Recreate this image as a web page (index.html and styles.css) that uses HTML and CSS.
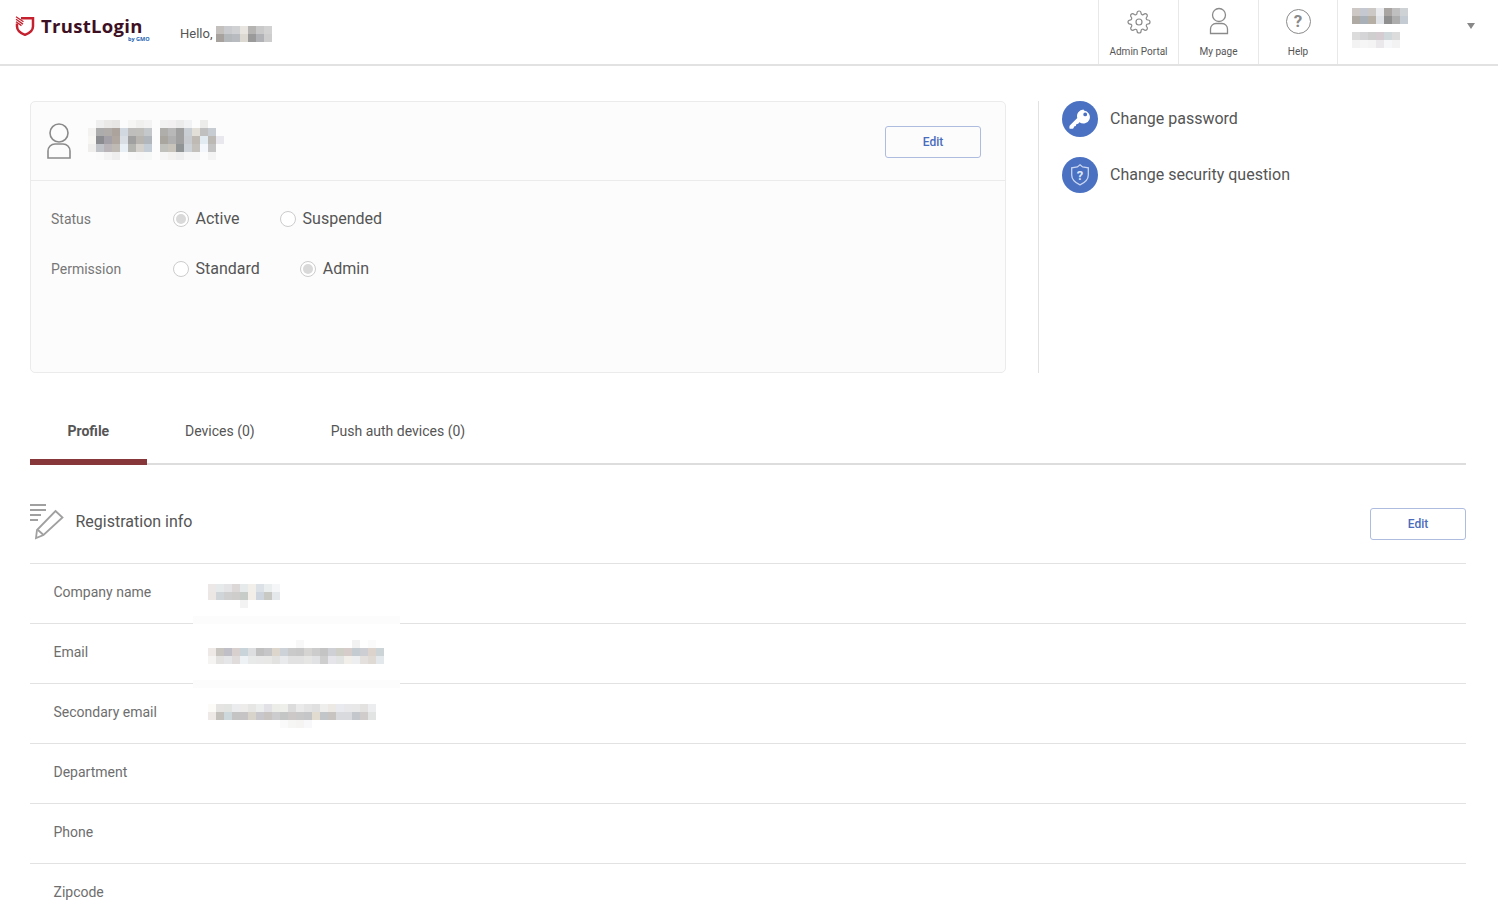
FILE: index.html
```html
<!DOCTYPE html>
<html lang="en">
<head>
<meta charset="utf-8">
<title>TrustLogin</title>
<link rel="stylesheet" href="styles.css">
</head>
<body>
<header class="topbar">
  <div class="brand">
    <svg class="shield" viewBox="0 0 20 20" width="20" height="20"><path d="M6 2.300H18v8.100c0 4-3.400 6.600-8 8.400-4.600-1.800-8-4.400-8-8.400V7.500" fill="none" stroke="#c5202e" stroke-width="2.500"/><path d="M1 .8l7.500 5M1 3.300l7 4.800M1 5.800l5.500 3.800" stroke="#c5202e" stroke-width="1.300" fill="none"/></svg>
    <div class="wordmark">TrustLogin<span class="bygmo">by GMO</span></div>
  </div>
  <div class="hello">Hello,
    <svg class="mosaic" width="56" height="16" viewBox="0 0 7 2" shape-rendering="crispEdges"><rect x="0" width="1" height="1" fill="#c4c0bd"/><rect x="1" width="1" height="1" fill="#c9cbcf"/><rect x="2" width="1" height="1" fill="#cfd1d3"/><rect x="3" width="1" height="1" fill="#e8e5e0"/><rect x="4" width="1" height="1" fill="#b5b4b3"/><rect x="5" width="1" height="1" fill="#c9c9c9"/><rect x="6" width="1" height="1" fill="#d2d2d2"/><rect x="0" y="1" width="1" height="1" fill="#a8a29e"/><rect x="1" y="1" width="1" height="1" fill="#b5b8bb"/><rect x="2" y="1" width="1" height="1" fill="#b8bcc0"/><rect x="3" y="1" width="1" height="1" fill="#dcd8d2"/><rect x="4" y="1" width="1" height="1" fill="#9a9a9a"/><rect x="5" y="1" width="1" height="1" fill="#b0b2b6"/><rect x="6" y="1" width="1" height="1" fill="#cdcdcd"/></svg>
  </div>
  <nav class="topnav">
    <a class="navitem">
      <span class="navicon"><svg width="24" height="24" viewBox="0 0 24 24" fill="none" stroke="#8a8a8a" stroke-width="1.200"><circle cx="12" cy="12" r="3"/><path d="M19.4 15a1.65 1.65 0 0 0 .33 1.82l.06.06a2 2 0 0 1 0 2.83 2 2 0 0 1-2.83 0l-.06-.06a1.65 1.65 0 0 0-1.82-.33 1.65 1.65 0 0 0-1 1.51V21a2 2 0 0 1-2 2 2 2 0 0 1-2-2v-.09A1.65 1.65 0 0 0 9 19.4a1.65 1.65 0 0 0-1.82.33l-.06.06a2 2 0 0 1-2.83 0 2 2 0 0 1 0-2.83l.06-.06a1.65 1.65 0 0 0 .33-1.82 1.65 1.65 0 0 0-1.51-1H3a2 2 0 0 1-2-2 2 2 0 0 1 2-2h.09A1.65 1.65 0 0 0 4.600 9a1.65 1.65 0 0 0-.33-1.82l-.06-.06a2 2 0 0 1 0-2.83 2 2 0 0 1 2.83 0l.06.06a1.65 1.65 0 0 0 1.82.33H9a1.65 1.65 0 0 0 1-1.51V3a2 2 0 0 1 2-2 2 2 0 0 1 2 2v.09a1.65 1.65 0 0 0 1 1.51 1.65 1.65 0 0 0 1.82-.33l.06-.06a2 2 0 0 1 2.83 0 2 2 0 0 1 0 2.83l-.06.06a1.65 1.65 0 0 0-.33 1.82V9a1.65 1.65 0 0 0 1.51 1H21a2 2 0 0 1 2 2 2 2 0 0 1-2 2h-.09a1.65 1.65 0 0 0-1.51 1z"/></svg></span>
      <span class="navlabel">Admin Portal</span>
    </a>
    <a class="navitem">
      <span class="navicon"><svg class="nav-person" width="20" height="28" viewBox="0 0 20 28" fill="none" stroke="#8a8a8a" stroke-width="1.300"><circle cx="10" cy="8" r="6.500"/><path d="M1.500 26.500v-4.500a5.500 5.500 0 0 1 5.500-5.500h6a5.500 5.500 0 0 1 5.500 5.500v4.500z"/></svg></span>
      <span class="navlabel">My page</span>
    </a>
    <a class="navitem navitem-narrow">
      <span class="navicon"><span class="helpring">?</span></span>
      <span class="navlabel">Help</span>
    </a>
    <div class="account">
      <div class="account-blocks">
        <svg class="mosaic" width="56" height="16" viewBox="0 0 7 2" shape-rendering="crispEdges"><rect x="0" width="1" height="1" fill="#cdc8c6"/><rect x="1" width="1" height="1" fill="#c5c8d0"/><rect x="2" width="1" height="1" fill="#cbc8c5"/><rect x="3" width="1" height="1" fill="#e8eaee"/><rect x="4" width="1" height="1" fill="#a8a5a3"/><rect x="5" width="1" height="1" fill="#bfbfbf"/><rect x="6" width="1" height="1" fill="#cfd2d5"/><rect x="0" y="1" width="1" height="1" fill="#b0aaa5"/><rect x="1" y="1" width="1" height="1" fill="#aab0b8"/><rect x="2" y="1" width="1" height="1" fill="#b5afa5"/><rect x="3" y="1" width="1" height="1" fill="#dfe3e8"/><rect x="4" y="1" width="1" height="1" fill="#8f8f8f"/><rect x="5" y="1" width="1" height="1" fill="#adadad"/><rect x="6" y="1" width="1" height="1" fill="#c5cbd2"/></svg>
        <svg class="mosaic" width="48" height="16" viewBox="0 0 6 2" shape-rendering="crispEdges"><rect x="0" width="1" height="1" fill="#dcdcdc"/><rect x="1" width="1" height="1" fill="#d5d5d8"/><rect x="2" width="1" height="1" fill="#cfcfcf"/><rect x="3" width="1" height="1" fill="#d4ccd0"/><rect x="4" width="1" height="1" fill="#d0d8dc"/><rect x="5" width="1" height="1" fill="#dcdcdc"/><rect x="0" y="1" width="1" height="1" fill="#f3f3f3"/><rect x="1" y="1" width="1" height="1" fill="#f6f6f6"/><rect x="2" y="1" width="1" height="1" fill="#f4f4f4"/><rect x="3" y="1" width="1" height="1" fill="#ebe8ec"/><rect x="4" y="1" width="1" height="1" fill="#f6f7f8"/><rect x="5" y="1" width="1" height="1" fill="#f3f3f3"/></svg>
      </div>
      <span class="caret"></span>
    </div>
  </nav>
</header>

<main class="page">
  <section class="summary">
    <div class="card">
      <div class="card-head">
        <svg class="card-person" width="26" height="36" viewBox="0 0 26 36" fill="none" stroke="#8a8a8a" stroke-width="1.600"><circle cx="13" cy="10" r="9"/><path d="M2 35v-7a7 7 0 0 1 7-7h8a7 7 0 0 1 7 7v7z"/></svg>
        <svg class="mosaic card-name" width="136" height="40" viewBox="0 0 17 5" shape-rendering="crispEdges">
          <rect x="1" width="1" height="1" fill="#efefef"/><rect x="2" width="1" height="1" fill="#ebe9e8"/><rect x="3" width="1" height="1" fill="#e8e6e4"/><rect x="5" width="1" height="1" fill="#f6f6f4"/><rect x="6" width="1" height="1" fill="#f0f0ee"/><rect x="7" width="1" height="1" fill="#f3f3f3"/><rect x="9" width="1" height="1" fill="#f2f2f2"/><rect x="10" width="1" height="1" fill="#f2f0f0"/><rect x="11" width="1" height="1" fill="#ebebeb"/><rect x="12" width="1" height="1" fill="#f0f2f4"/><rect x="14" width="1" height="1" fill="#ececea"/>
          <rect y="1" x="0" width="1" height="1" fill="#f4f2f0"/><rect y="1" x="1" width="1" height="1" fill="#acacac"/><rect y="1" x="2" width="1" height="1" fill="#b0acaa"/><rect y="1" x="3" width="1" height="1" fill="#aba39c"/><rect y="1" x="4" width="1" height="1" fill="#d2d8e0"/><rect y="1" x="5" width="1" height="1" fill="#c0bebc"/><rect y="1" x="6" width="1" height="1" fill="#c0bfbc"/><rect y="1" x="7" width="1" height="1" fill="#c4c8ca"/><rect y="1" x="9" width="1" height="1" fill="#b0aeaa"/><rect y="1" x="10" width="1" height="1" fill="#b8b8b8"/><rect y="1" x="11" width="1" height="1" fill="#a0a0a0"/><rect y="1" x="12" width="1" height="1" fill="#c8ced4"/><rect y="1" x="13" width="1" height="1" fill="#e2ded8"/><rect y="1" x="14" width="1" height="1" fill="#c0c0c0"/><rect y="1" x="15" width="1" height="1" fill="#c6ccd2"/>
          <rect y="2" x="0" width="1" height="1" fill="#f8f6f2"/><rect y="2" x="1" width="1" height="1" fill="#8a8c90"/><rect y="2" x="2" width="1" height="1" fill="#a4a0a8"/><rect y="2" x="3" width="1" height="1" fill="#b0a8a0"/><rect y="2" x="4" width="1" height="1" fill="#d8dee4"/><rect y="2" x="5" width="1" height="1" fill="#a0a0a0"/><rect y="2" x="6" width="1" height="1" fill="#b8b4b0"/><rect y="2" x="7" width="1" height="1" fill="#b0b6bc"/><rect y="2" x="9" width="1" height="1" fill="#a8a69f"/><rect y="2" x="10" width="1" height="1" fill="#b0b0b0"/><rect y="2" x="11" width="1" height="1" fill="#a0a0a0"/><rect y="2" x="12" width="1" height="1" fill="#c8ccd0"/><rect y="2" x="13" width="1" height="1" fill="#c0bab4"/><rect y="2" x="14" width="1" height="1" fill="#e2eaf2"/><rect y="2" x="15" width="1" height="1" fill="#bcb8b4"/><rect y="2" x="16" width="1" height="1" fill="#e8e8ee"/>
          <rect y="3" x="0" width="1" height="1" fill="#f0eeec"/><rect y="3" x="1" width="1" height="1" fill="#c0c4c8"/><rect y="3" x="2" width="1" height="1" fill="#b8b4b8"/><rect y="3" x="3" width="1" height="1" fill="#c0bab4"/><rect y="3" x="4" width="1" height="1" fill="#e8f0f6"/><rect y="3" x="5" width="1" height="1" fill="#b4b4b0"/><rect y="3" x="6" width="1" height="1" fill="#d4d0cc"/><rect y="3" x="7" width="1" height="1" fill="#c4ccd6"/><rect y="3" x="9" width="1" height="1" fill="#c0c0bc"/><rect y="3" x="10" width="1" height="1" fill="#c8c4bc"/><rect y="3" x="11" width="1" height="1" fill="#909494"/><rect y="3" x="12" width="1" height="1" fill="#ccd2d8"/><rect y="3" x="13" width="1" height="1" fill="#c4c0bc"/><rect y="3" x="14" width="1" height="1" fill="#f4f8fc"/><rect y="3" x="15" width="1" height="1" fill="#c4c4c4"/>
          <rect y="4" x="1" width="1" height="1" fill="#fafafa"/><rect y="4" x="2" width="1" height="1" fill="#f4f4f4"/><rect y="4" x="3" width="1" height="1" fill="#eeeeee"/><rect y="4" x="5" width="1" height="1" fill="#f8f8f8"/><rect y="4" x="6" width="1" height="1" fill="#f6f6f6"/><rect y="4" x="7" width="1" height="1" fill="#f6f8f8"/><rect y="4" x="9" width="1" height="1" fill="#f6f6f6"/><rect y="4" x="10" width="1" height="1" fill="#f4f2f0"/><rect y="4" x="11" width="1" height="1" fill="#eeeeee"/><rect y="4" x="12" width="1" height="1" fill="#f6f6f6"/><rect y="4" x="13" width="1" height="1" fill="#f6f6f6"/><rect y="4" x="15" width="1" height="1" fill="#f4f4f4"/>
        </svg>
        <button class="edit-btn card-edit">Edit</button>
      </div>
      <div class="card-body">
        <div class="field">
          <span class="field-label">Status</span>
          <div class="options">
            <label class="option"><span class="radio is-on"></span>Active</label>
            <label class="option"><span class="radio"></span>Suspended</label>
          </div>
        </div>
        <div class="field">
          <span class="field-label">Permission</span>
          <div class="options">
            <label class="option"><span class="radio"></span>Standard</label>
            <label class="option"><span class="radio is-on"></span>Admin</label>
          </div>
        </div>
      </div>
    </div>
    <aside class="side">
      <a class="side-link">
        <span class="side-icon"><svg width="24" height="24" viewBox="0 0 24 24"><path d="M15.500 2.500a6.500 6.500 0 0 0-6.200 8.400L2 18.200c-.4.400-.6.900-.6 1.500v1.200c0 .5.400.9.900.9h2.200c.5 0 .9-.3 1.100-.8l.5-1.500 1.700-.4.500-1.900 1.900-.5 1.200-1.500a6.500 6.500 0 1 0 4.600-11.600zm1.700 3a1.900 1.900 0 1 1 0 3.800 1.900 1.900 0 0 1 0-3.800z" fill="#fff" fill-rule="evenodd"/></svg></span>
        Change password
      </a>
      <a class="side-link">
        <span class="side-icon"><svg width="24" height="24" viewBox="0 0 24 24" fill="none" stroke="#c9d5ef" stroke-width="1.300"><path d="M12 1.800l2.600 2.100 5.700 1v7c0 4.400-3 7.500-8.300 9.900-5.300-2.400-8.300-5.500-8.300-9.900v-7l5.700-1z"/><text class="shield-q" x="12" y="16.800" text-anchor="middle">?</text></svg></span>
        Change security question
      </a>
    </aside>
  </section>

  <nav class="tabs">
    <a class="tab is-active">Profile</a>
    <a class="tab">Devices (0)</a>
    <a class="tab">Push auth devices (0)</a>
  </nav>

  <section class="info">
    <div class="info-head">
      <svg width="34" height="36" viewBox="0 0 34 36" fill="none" stroke="#a0a0a0" stroke-width="1.800"><path d="M0 1h16M0 6h16M0 11h11M0 16h8"/><path d="M25.500 7l7 6.500L13.500 31l-7.500 3 1-8z"/><path d="M8 26l5.500 5"/></svg>
      <h2 class="info-title">Registration info</h2>
      <button class="edit-btn info-edit">Edit</button>
    </div>
    <div class="info-row">
      <span class="info-label">Company name</span>
      <svg class="mosaic value-company" width="72" height="24" viewBox="0 0 9 3" shape-rendering="crispEdges"><rect x="0" width="1" height="1" fill="#ece8e8"/><rect x="1" width="1" height="1" fill="#e6eaea"/><rect x="2" width="1" height="1" fill="#e4e4e6"/><rect x="3" width="1" height="1" fill="#dcd8d8"/><rect x="4" width="1" height="1" fill="#e6eaea"/><rect x="5" width="1" height="1" fill="#f2efea"/><rect x="6" width="1" height="1" fill="#dce1e8"/><rect x="7" width="1" height="1" fill="#ebeeee"/><rect x="8" width="1" height="1" fill="#f5f6f8"/><rect y="1" x="0" width="1" height="1" fill="#ece6e4"/><rect y="1" x="1" width="1" height="1" fill="#cfd5d8"/><rect y="1" x="2" width="1" height="1" fill="#cfcfcf"/><rect y="1" x="3" width="1" height="1" fill="#cfcdcc"/><rect y="1" x="4" width="1" height="1" fill="#c8ccc8"/><rect y="1" x="5" width="1" height="1" fill="#f3efe8"/><rect y="1" x="6" width="1" height="1" fill="#cfd5de"/><rect y="1" x="7" width="1" height="1" fill="#c8c8c5"/><rect y="1" x="8" width="1" height="1" fill="#e4e8ea"/><rect y="2" x="4" width="1" height="1" fill="#f3f3f3"/></svg>
    </div>
    <div class="info-row">
      <span class="info-label">Email</span>
      <span class="smudge smudge-top"></span><span class="smudge smudge-bottom"></span>
      <svg class="mosaic value-email" width="176" height="24" viewBox="0 0 22 3" shape-rendering="crispEdges"><rect x="11" width="1" height="1" fill="#f8f8f8"/><rect x="18" width="1" height="1" fill="#f2f2f2"/><rect x="20" width="1" height="1" fill="#fbfbfb"/><rect y="1" x="0" width="1" height="1" fill="#eee9e6"/><rect y="1" x="1" width="1" height="1" fill="#c8c4c0"/><rect y="1" x="2" width="1" height="1" fill="#c0bfc8"/><rect y="1" x="3" width="1" height="1" fill="#d8d0cf"/><rect y="1" x="4" width="1" height="1" fill="#c8d4da"/><rect y="1" x="5" width="1" height="1" fill="#dcdedf"/><rect y="1" x="6" width="1" height="1" fill="#c0c0c0"/><rect y="1" x="7" width="1" height="1" fill="#c6c6c8"/><rect y="1" x="8" width="1" height="1" fill="#dcd6cc"/><rect y="1" x="9" width="1" height="1" fill="#cdd2d8"/><rect y="1" x="10" width="1" height="1" fill="#cacaca"/><rect y="1" x="11" width="1" height="1" fill="#c8c8c8"/><rect y="1" x="12" width="1" height="1" fill="#d6d4d2"/><rect y="1" x="13" width="1" height="1" fill="#cccccc"/><rect y="1" x="14" width="1" height="1" fill="#c4c4c4"/><rect y="1" x="15" width="1" height="1" fill="#cfcfd6"/><rect y="1" x="16" width="1" height="1" fill="#cfcfc8"/><rect y="1" x="17" width="1" height="1" fill="#d6cdca"/><rect y="1" x="18" width="1" height="1" fill="#c4ccd2"/><rect y="1" x="19" width="1" height="1" fill="#ccced4"/><rect y="1" x="20" width="1" height="1" fill="#dcd4cc"/><rect y="1" x="21" width="1" height="1" fill="#ccd4d8"/><rect y="2" x="0" width="1" height="1" fill="#f6f4f2"/><rect y="2" x="1" width="1" height="1" fill="#e4e2e0"/><rect y="2" x="2" width="1" height="1" fill="#e4e6e8"/><rect y="2" x="3" width="1" height="1" fill="#e0dcdc"/><rect y="2" x="4" width="1" height="1" fill="#eef2f4"/><rect y="2" x="5" width="1" height="1" fill="#e8eaea"/><rect y="2" x="6" width="1" height="1" fill="#e8e8e8"/><rect y="2" x="7" width="1" height="1" fill="#e8e8e6"/><rect y="2" x="8" width="1" height="1" fill="#e2e2e0"/><rect y="2" x="9" width="1" height="1" fill="#e8eaec"/><rect y="2" x="10" width="1" height="1" fill="#e2e2e2"/><rect y="2" x="11" width="1" height="1" fill="#e2e2e2"/><rect y="2" x="12" width="1" height="1" fill="#e6e6e4"/><rect y="2" x="13" width="1" height="1" fill="#e0e2e4"/><rect y="2" x="14" width="1" height="1" fill="#cecece"/><rect y="2" x="15" width="1" height="1" fill="#e6e6ea"/><rect y="2" x="16" width="1" height="1" fill="#e2e4e4"/><rect y="2" x="17" width="1" height="1" fill="#f2efea"/><rect y="2" x="18" width="1" height="1" fill="#eceef0"/><rect y="2" x="19" width="1" height="1" fill="#e4e0de"/><rect y="2" x="20" width="1" height="1" fill="#e0dad4"/><rect y="2" x="21" width="1" height="1" fill="#e2e8ec"/></svg>
    </div>
    <div class="info-row">
      <span class="info-label">Secondary email</span>
      <svg class="mosaic value-secondary" width="168" height="24" viewBox="0 0 21 3" shape-rendering="crispEdges"><rect x="0" width="1" height="1" fill="#fdfbf8"/><rect x="1" width="1" height="1" fill="#e6e4e2"/><rect x="2" width="1" height="1" fill="#e2e4e2"/><rect x="3" width="1" height="1" fill="#eaecee"/><rect x="4" width="1" height="1" fill="#eeecea"/><rect x="5" width="1" height="1" fill="#e6e6e4"/><rect x="6" width="1" height="1" fill="#eceeee"/><rect x="7" width="1" height="1" fill="#e2e2e6"/><rect x="8" width="1" height="1" fill="#ecece8"/><rect x="9" width="1" height="1" fill="#eeeeea"/><rect x="10" width="1" height="1" fill="#dcdcdc"/><rect x="11" width="1" height="1" fill="#eaeaea"/><rect x="12" width="1" height="1" fill="#e4e4e4"/><rect x="13" width="1" height="1" fill="#e0e0e0"/><rect x="14" width="1" height="1" fill="#eeeeec"/><rect x="15" width="1" height="1" fill="#ece8e4"/><rect x="16" width="1" height="1" fill="#e8eaf0"/><rect x="17" width="1" height="1" fill="#e8e8ea"/><rect x="18" width="1" height="1" fill="#e8e8e8"/><rect x="19" width="1" height="1" fill="#e4e2e0"/><rect x="20" width="1" height="1" fill="#ecedee"/><rect y="1" x="0" width="1" height="1" fill="#eee9e6"/><rect y="1" x="1" width="1" height="1" fill="#c4c0bc"/><rect y="1" x="2" width="1" height="1" fill="#ccd8dc"/><rect y="1" x="3" width="1" height="1" fill="#c4c4c4"/><rect y="1" x="4" width="1" height="1" fill="#c6c4c4"/><rect y="1" x="5" width="1" height="1" fill="#d8d4cc"/><rect y="1" x="6" width="1" height="1" fill="#c8c8cc"/><rect y="1" x="7" width="1" height="1" fill="#c8c4c2"/><rect y="1" x="8" width="1" height="1" fill="#ccccce"/><rect y="1" x="9" width="1" height="1" fill="#c4c6c6"/><rect y="1" x="10" width="1" height="1" fill="#ccc8c8"/><rect y="1" x="11" width="1" height="1" fill="#c8c8c8"/><rect y="1" x="12" width="1" height="1" fill="#c4c6c8"/><rect y="1" x="13" width="1" height="1" fill="#e2dcd0"/><rect y="1" x="14" width="1" height="1" fill="#c2c6c8"/><rect y="1" x="15" width="1" height="1" fill="#c8c4c2"/><rect y="1" x="16" width="1" height="1" fill="#d8dade"/><rect y="1" x="17" width="1" height="1" fill="#d8dade"/><rect y="1" x="18" width="1" height="1" fill="#c4c8cc"/><rect y="1" x="19" width="1" height="1" fill="#d0cccc"/><rect y="1" x="20" width="1" height="1" fill="#e2e4e4"/><rect y="2" x="9" width="1" height="1" fill="#fafafa"/><rect y="2" x="10" width="1" height="1" fill="#f6f6f4"/><rect y="2" x="11" width="1" height="1" fill="#f5f4f2"/><rect y="2" x="12" width="1" height="1" fill="#f8f8fa"/></svg>
    </div>
    <div class="info-row"><span class="info-label">Department</span></div>
    <div class="info-row"><span class="info-label">Phone</span></div>
    <div class="info-row"><span class="info-label">Zipcode</span></div>
  </section>
</main>
</body>
</html>
```

FILE: styles.css
```css
* { box-sizing: border-box; }
html, body { margin: 0; padding: 0; height: 909px; overflow: hidden; background: #fff; }
body { font-family: Roboto, "Liberation Sans", sans-serif; color: #555; }
.mosaic { display: block; flex: none; }

.topbar { display: flex; align-items: stretch; height: 66px; border-bottom: 2px solid #e2e2e2; background: #fff; }
.brand { display: flex; align-items: flex-start; padding: 16px 0 0 15px; width: 180px; flex: none; }
.shield { flex: none; }
.wordmark { position: relative; margin: -1px 0 0 6px; font-family: "Open Sans", sans-serif; font-weight: 700; font-size: 18.500px; line-height: 21px; color: #3d1024; letter-spacing: .3px; }
.bygmo { position: absolute; right: -7px; top: 22px; font-size: 5.500px; line-height: 5px; font-weight: 700; letter-spacing: 0; color: #1b64b4; white-space: nowrap; }
.hello { display: flex; align-items: center; gap: 4px; font-size: 13px; color: #555; padding-top: 3px; height: 64px; }
.topnav { display: flex; margin-left: auto; height: 64px; }
.navitem { width: 80px; border-left: 1px solid #e8e8e8; display: flex; flex-direction: column; align-items: center; }
.navitem-narrow { width: 79px; }
.navicon { height: 44px; display: flex; align-items: center; justify-content: center; }
.nav-person { margin-bottom: 2px; }
.navlabel { font-size: 10px; line-height: 14px; margin-top: 1px; color: #555; }
.helpring { width: 25px; height: 25px; border: 1.500px solid #8a8a8a; border-radius: 50%; font-size: 17px; line-height: 22px; font-weight: 700; text-align: center; color: #8a8a8a; margin-top: -2px; }
.account { width: 161px; border-left: 1px solid #e8e8e8; display: flex; padding: 8px 23px 0 14px; justify-content: space-between; }
.account-blocks { display: flex; flex-direction: column; gap: 8px; }
.caret { width: 0; height: 0; border-left: 4.500px solid transparent; border-right: 4.500px solid transparent; border-top: 6px solid #888; margin-top: 15px; }

.page { padding: 35px 32px 0 30px; }
.summary { display: flex; height: 272px; }
.card { width: 976px; border: 1px solid #ebebeb; border-radius: 5px; background: #fcfcfc; flex: none; }
.card-head { display: flex; align-items: center; height: 79px; border-bottom: 1px solid #ebebeb; padding: 0 24px 0 15px; }
.card-person { flex: none; margin-bottom: 1px; }
.card-name { margin-left: 16px; margin-bottom: 3px; }
.edit-btn { width: 96px; height: 32px; background: #fff; border: 1px solid #aebcdf; border-radius: 3px; font-family: Roboto, sans-serif; font-size: 12px; font-weight: 500; color: #4a6cbc; padding: 0; }
.card-edit { margin-left: auto; background: transparent; margin-top: 1px; }
.card-body { padding: 13px 0 0 20px; }
.field { display: flex; align-items: center; height: 50px; }
.field-label { width: 122px; font-size: 14px; color: #777; }
.options { display: flex; gap: 40.500px; margin-top: -2px; }
.option { display: flex; align-items: center; gap: 6.500px; font-size: 16px; color: #555; }
.radio { width: 16px; height: 16px; margin-top: 2px; border: 1px solid #ccc; border-radius: 50%; background: #fff; display: block; position: relative; }
.radio.is-on::after { content: ""; position: absolute; inset: 2px; border-radius: 50%; background: #d9d9d9; }

.side { margin-left: 32px; border-left: 1px solid #e2e2e2; padding-left: 23px; display: flex; flex-direction: column; gap: 20px; }
.side-link { display: flex; align-items: center; gap: 12px; font-size: 16px; line-height: 36px; color: #555; }
.side-icon { width: 36px; height: 36px; border-radius: 50%; background: #4a71c2; display: flex; align-items: center; justify-content: center; }
.shield-q { font-family: Roboto, sans-serif; font-size: 13px; font-weight: 700; fill: #dfe6f6; stroke: none; }

.tabs { display: flex; margin-top: 24px; height: 68px; border-bottom: 2px solid #ddd; }
.tab { height: 68px; padding: 0 38px; font-size: 14px; line-height: 68px; color: #555; flex: none; }
.tab.is-active { position: relative; font-weight: 700; width: 117px; padding: 0 0 0 37.500px; }
.tab.is-active::after { content: ""; position: absolute; left: 0; right: 0; bottom: 0; height: 6px; background: #873639; }

.info { margin-top: 39px; }
.info-head { display: flex; align-items: center; height: 60px; padding-bottom: 23px; border-bottom: 1px solid #e2e2e2; }
.info-title { margin: 0 0 2px 11.500px; font-size: 16px; font-weight: 400; color: #555; }
.info-edit { margin-left: auto; margin-top: 4px; }
.info-row { position: relative; display: flex; align-items: center; height: 60px; border-bottom: 1px solid #e2e2e2; padding-left: 23.500px; }
.info-label { width: 154.500px; margin-bottom: 4px; font-size: 14px; color: #6e6e6e; flex: none; }
.value-company { margin-top: 5px; }
.value-email { margin-top: -3px; }
.value-secondary { margin-top: 5px; }
.smudge { position: absolute; left: 163px; width: 207px; height: 8px; background: #fcfcfc; }
.smudge-top { top: -8px; }
.smudge-bottom { bottom: -5px; }
```
